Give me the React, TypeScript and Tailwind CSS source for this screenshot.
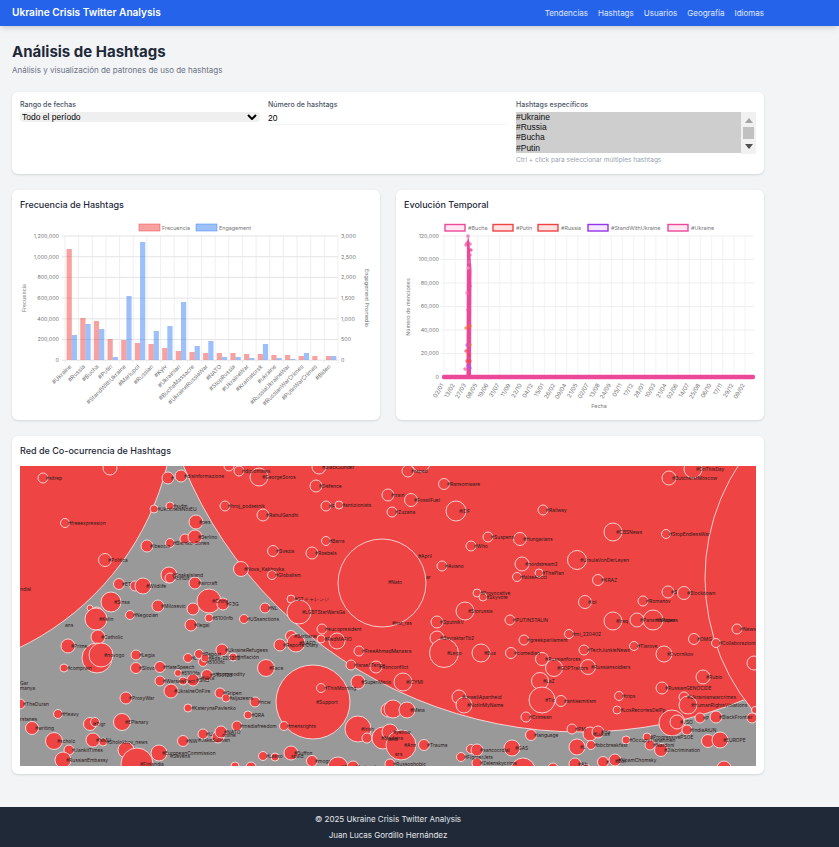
import React from 'react';

type Node = [number, number, number, string?];

const NAV_LINKS = ['Tendencias', 'Hashtags', 'Usuarios', 'Geografía', 'Idiomas'];

const BAR_LABELS = ['#Ukraine', '#Russia', '#Bucha', '#Putin', '#StandWithUkraine', '#Mariupol', '#Russian', '#Kyiv', '#Ukrainian', '#BuchaMassacre', '#UkraineRussiaWar', '#NATO', '#StopRussia', '#UkraineWar', '#Kramatorsk', '#ukraine', '#RussiaUkraineWar', '#RussianWarCrimes', '#PutinWarCrimes', '#Biden'];
// bar tops in page pixels
const RED_TOPS = [249, 318, 321, 339, 340, 343, 344, 348, 351, 352, 353, 353, 353, 354, 354, 355, 355, 356, 356, 356];
const BLUE_TOPS = [335, 324, 329, 357, 296, 242, 331, 326, 302, 346, 341, 357, 357, 358, 344, 358, 359, 353, 360, 356];

const DATES = ['02/01', '13/02', '27/03', '08/05', '19/06', '31/07', '11/09', '22/10', '04/12', '15/01', '26/02', '09/04', '21/05', '02/07', '13/08', '24/09', '05/11', '17/12', '28/01', '10/03', '21/04', '02/06', '14/07', '25/08', '06/10', '17/11', '29/12', '09/02'];

const LEGEND: [number, string, string, string][] = [
  [445, '#Bucha', '#ec4899', '#fce7f3'],
  [493, '#Putin', '#ef4444', '#fee2e2'],
  [538, '#Russia', '#ef4444', '#fee2e2'],
  [588, '#StandWithUkraine', '#9333ea', '#f3e8ff'],
  [668, '#Ukraine', '#ec4899', '#fce7f3'],
];

const SPIKE_DOTS: [number, number, string][] = [
  [468, 236, '#ec4899'], [467, 243, '#ec4899'], [470, 244, '#ec4899'], [466, 245, '#ec4899'], [470, 250, '#ec4899'], [471, 250, '#ec4899'],
  [470, 255, '#ec4899'], [469, 262, '#f472b6'], [468, 268, '#f9a8d4'], [470, 286, '#ec4899'], [467, 293, '#f472b6'], [468, 310, '#ec4899'],
  [466, 328, '#f97316'], [470, 326, '#f97316'], [470, 345, '#f97316'], [466, 351, '#ef4444'], [469, 355, '#ef4444'], [467, 361, '#ef4444'],
  [470, 361, '#ef4444'], [468, 366, '#a855f7'], [465, 369, '#ec4899'], [470, 368, '#a855f7'], [467, 345, '#a855f7'], [469, 372, '#ec4899'],
];

const NODES: Node[] = [
  [43, 478, 5, '#sitrep'], [110, 468, 7], [168, 478, 6, '#'], [181, 476, 6, '#disinformazione'], [229, 466, 5], [239, 471, 5, '#diplomates'],
  [259, 477, 9, '#GeorgeSoros'], [319, 467, 7, '#BlackSunder'], [316, 486, 6, '#Defence'], [388, 495, 6, '#train'], [326, 506, 5, '#F'],
  [339, 505, 4, '#antizionists'], [225, 506, 5, '#hroj_podsetnik'], [263, 515, 6, '#RahulGandhi'], [154, 509, 4, '#UkraineIsNotEU'], [170, 506, 4, '#syfm'],
  [65, 523, 4.5, '#freeexpression'], [196, 522, 7, '#pes'], [185, 539, 5], [195, 537, 7, '#Berlino'], [147, 546, 6, '#Ibeocio'], [170, 543, 4.5, '#Bielsko-Sones'],
  [105, 560, 6.5, '#Politica'], [273, 551, 5.5, '#Svezia'], [312, 553, 6, '#Roebels'], [326, 541, 4.5, '#Barra'], [241, 569, 7.5, '#Nova_Kakhovka'],
  [272, 575, 4.5, '#Globalism'], [169, 575, 8, '#SnakeIsland'], [170, 578, 5, '#cirtuit'], [195, 583, 6, '#aircraft'], [119, 584, 5.5, '#ET'], [135, 586, 5],
  [143, 586, 8, '#Wildlife'], [291, 599, 4, '#GTチャレンジ'], [111, 602, 10, '#Sinsa'], [158, 606, 6, '#Milosevic'], [209, 601, 12, '#China'], [223, 604, 6, '#F3G'],
  [265, 608, 5, '#NL'], [299, 612, 12, '#LGBTStarWarsGa'], [193, 609, 6], [90, 608, 3], [97, 613, 6],
  [96, 619, 11, '#Kelin'], [130, 615, 4.5, '#Negozian'], [191, 625, 6, '#Ilegal'], [209, 618, 4, '#5100rfb'], [244, 619, 4.5, '#USsanctions'],
  [98, 637, 7, '#Catholic'], [68, 646, 7, '#Prime'], [97, 658, 15], [101, 655, 12, '#novogo'], [136, 655, 5, '#Legia'], [64, 668, 4, '#comprain'], [136, 668, 5.5, '#Slovo'],
  [160, 667, 5.5, '#HateSpeech'], [188, 658, 4.5, '#L'], [199, 654, 4.5, '#Repost'], [203, 662, 4.5, '#5100fc'], [205, 658, 4, '#Ads-220202'], [222, 650, 6, '#UkraineRefugees'],
  [233, 657, 4, '#Inflación'], [266, 668, 8.5, '#Face'], [178, 673, 3.5, '#5100fa'], [207, 675, 5.5, '#510012d'], [193, 680, 6, '#SNB'], [160, 681, 5, '#WarsawPact'], [183, 681, 4],
  [171, 691, 7, '#UkraineOnFire'], [220, 693, 5, '#Gripen'], [226, 698, 4, '#aljazeera'], [126, 698, 6, '#ProxyWar'], [255, 702, 5, '#ncw'], [321, 688, 4.5, '#ThisMorning'],
  [188, 708, 4, '#KaterynaPavlenko'], [58, 714, 4.5, '#Heavy'], [248, 715, 4, '#QRA'], [32, 728, 6.5, '#writing'], [90, 724, 6.5, '#Tigr'], [95, 722, 4.5], [122, 722, 8.5, '#EPlenary'],
  [237, 726, 5, '#mediafreedom'], [284, 726, 4.5, '#mensrights'], [358, 729, 13, '#Irish'], [54, 741, 8.5, '#scholz'], [93, 740, 7, '#NMU'], [103, 742, 4, '#Sholokhov_news'],
  [183, 741, 5.5, '#NW'], [203, 734, 5, '#U'], [218, 737, 6], [221, 732, 6, '#NATO'], [69, 750, 5, '#JankitTimes'], [63, 760, 8, '#RussianEmbassy'], [126, 750, 8],
  [137, 764, 16, '#Finlandia'], [159, 753, 8, '#EuropeanCommission'], [263, 756, 4.5, '#Lasso'], [275, 757, 4], [291, 753, 7, '#Buffon'], [312, 761, 5.5, '#mogr'],
  [338, 767, 10, '#SaveMariupol'], [353, 767, 6], [235, 766, 4], [251, 767, 5], [20, 704, 5, '#TheDuran'], [280, 645, 6, '#ReporterDiary'], [291, 636, 5.5, '#Barbarie'],
  [296, 643, 9, '#NAFO'], [322, 629, 5, '#eucopresident'], [321, 639, 4, '#RedMAFIO'], [337, 641, 8], [359, 651, 5, '#FreeAhmadManasra'], [351, 665, 5, '#IsraeliTerror'],
  [376, 667, 6, '#Ronconflict'], [358, 682, 7, '#SuperMario'], [367, 738, 5], [378, 738, 6, '#Madeira'], [383, 738, 11], [388, 710, 7],
  [421, 463, 9], [408, 471, 6, '#raped'], [444, 484, 5.5, '#Ransomware'], [411, 500, 6.5, '#FossilFuel'], [392, 512, 5, '#Zuzana'], [456, 511, 10, '#IDF'], [543, 510, 5, '#Railway'],
  [613, 532, 9, '#CBSNews'], [666, 534, 4.5, '#StopEndlessWar'], [669, 478, 7, '#ButchersfMoscow'], [693, 469, 9, '#OnThisDay'], [488, 537, 5, '#Suspens'], [520, 539, 6.5, '#Hungarians'],
  [471, 546, 5, '#Who'], [577, 560, 9.5, '#UrsulaVonDerLeyen'], [442, 566, 5, '#Aviano'], [522, 564, 7, '#nordstream2'], [539, 573, 4, '#ThePlan'], [517, 577, 4.5, '#falseAccci'],
  [598, 580, 5.5, '#KRAZ'], [477, 593, 4, '#Provocative'], [483, 597, 4, '#Skyvote'], [668, 592, 6, '#S'], [684, 593, 6.5, '#Blockdown'], [643, 601, 5, '#Romanov'], [585, 602, 6.5, '#lol'],
  [465, 611, 9, '#Storussia'], [437, 622, 6, '#SputnikV'], [510, 620, 5, '#PUTINSTALIN'], [613, 621, 9, '#Iraq'], [637, 620, 7, '#PanamaPapers'], [653, 620, 10, '#Nesara'],
  [737, 629, 5, '#News'], [569, 634, 4.5, '#mi_220402'], [437, 638, 7, '#BayraktarTb2'], [444, 653, 14.5, '#Lego'], [481, 653, 9, '#Bus'], [524, 640, 5, '#greekparliament'],
  [511, 653, 5.5, '#comedian'], [584, 650, 5, '#TechJunkieNews'], [634, 646, 4.5, '#Tlarove'], [664, 654, 8, '#Dvornikov'], [694, 639, 5.5, '#OMG'], [716, 643, 4.5, '#Collaborazionisti'],
  [542, 659, 6.5, '#Russianforces'], [554, 668, 8.5, '#GOPTraitors'], [588, 667, 7.5, '#Russiansoldiers'], [403, 682, 9, '#ICYMI'], [540, 681, 8.5, '#LaZ'], [703, 677, 7, '#Rubio'],
  [662, 688, 6, '#RussianGENOCIDE'], [619, 696, 4.5, '#trips'], [542, 700, 13, '#Tic'], [561, 701, 5.5, '#antisemitism'], [459, 697, 7, '#IsraeliApartheid'], [464, 705, 8, '#NotInMyName'],
  [617, 710, 4, '#LosRecortesDelPp'], [526, 717, 5, '#Crimean'], [684, 697, 5, '#Ukrainianwarcrimes'], [688, 705, 9, '#HumanRightsViolations'], [700, 718, 5, '#P'], [716, 717, 6, '#BlackFrontier'],
  [752, 718, 5], [672, 723, 13], [677, 722, 7, '#JSO'], [687, 730, 5, '#IndiaAtUN'], [393, 709, 9], [407, 710, 8, '#Meta'], [390, 732, 8, '#yellow'], [401, 745, 15, '#Ann'],
  [424, 745, 5.5, '#Trauma'], [531, 735, 5.5, '#language'], [572, 729, 5, '#PM'], [590, 734, 7, '#Lukas'], [598, 732, 6, '#Ha'], [577, 747, 8, '#L'], [591, 745, 4.5, '#bbcbreakfast'],
  [626, 740, 4, '#OccupyTiananmen'], [647, 737, 4, '#ProgressivePSOE'], [650, 745, 5, '#Nardoni'], [661, 750, 6.5, '#Discrimination'], [708, 741, 6.5], [720, 740, 8, '#EUROPE'],
  [512, 748, 8, '#GAS'], [471, 749, 4.5], [477, 750, 6, '#sancocrdial'], [461, 757, 4.5, '#FighterJets'], [477, 763, 5, '#Zelenskycrime'], [390, 764, 5, '#Russophobic'],
  [523, 770, 12, '#USAAgency'], [553, 768, 5], [575, 764, 6, '#Ab'], [586, 768, 4], [603, 762, 5.5, '#'], [615, 760, 6, '#NoamChomsky'], [724, 768, 7], [755, 710, 3.5], [754, 663, 7],
];

const LOOSE_LABELS: [number, number, string][] = [
  [20, 591, 'ndial'], [20, 685, 'Gar'], [20, 690, 'manya'], [20, 721, 'rstanes'], [65, 627, 'ans'], [418, 558, '#April'], [426, 579, 'ar'], [388, 584, '#Nato'], [316, 704, '#Support'],
  [170, 758, '#Sevens'], [615, 763, '#Bot'], [198, 742, '#JakeSullivan'], [222, 737, 'online'], [291, 758, 'spald'], [201, 680, '#Viva'], [216, 676, '#commodity'], [386, 741, 'rland'], [395, 756, 'ers'],
  [392, 625, '#hat_ras'],
];

const Card = ({ title, children }: { title: string; children: React.ReactNode }) => (
  <div className="bg-white rounded-md shadow-sm p-2">
    <h2 className="text-[9px] leading-[14px] font-medium text-gray-800 mb-2">{title}</h2>
    {children}
  </div>
);

const BarChart = () => {
  const step = 273 / 20;
  return (
    <svg viewBox="20 220 352 192" className="block w-full h-[192px]" fontFamily="Inter, sans-serif" fontSize="5.4" fill="#777">
      <rect x="139" y="224" width="21" height="7" fill="#ef4444" fillOpacity="0.5" stroke="#ef4444" strokeOpacity="0.6" strokeWidth="0.8" />
      <text x="162" y="230">Frecuencia</text>
      <rect x="196" y="224" width="21" height="7" fill="#3b82f6" fillOpacity="0.5" stroke="#3b82f6" strokeOpacity="0.6" strokeWidth="0.8" />
      <text x="219" y="230">Engagement</text>
      {[0, 1, 2, 3, 4, 5, 6].map((i) => {
        const y = 236 + i * 20.7;
        return (
          <g key={i}>
            <line x1="62" x2="338" y1={y} y2={y} stroke="#dcdcdc" strokeWidth="0.8" />
            <text x="59" y={y + 1.8} textAnchor="end">{((6 - i) * 200000).toLocaleString('en-US')}</text>
            <text x="341" y={y + 1.8}>{((6 - i) * 500).toLocaleString('en-US')}</text>
          </g>
        );
      })}
      {BAR_LABELS.map((label, i) => {
        const x = 65 + i * step;
        const mid = x + step / 2;
        return (
          <g key={label}>
            <line x1={x} x2={x} y1="236" y2="363" stroke="#e8e8e8" strokeWidth="0.7" />
            <rect x={x + 1.6} y={RED_TOPS[i]} width="5.2" height={360 - RED_TOPS[i]} fill="#ef4444" fillOpacity="0.5" />
            <rect x={x + 6.8} y={BLUE_TOPS[i]} width="5.2" height={360 - BLUE_TOPS[i]} fill="#3b82f6" fillOpacity="0.5" />
            <text x={mid} y="367" fontSize="5.8" textAnchor="end" transform={`rotate(-45 ${mid} 367)`}>{label}</text>
          </g>
        );
      })}
      <line x1="338" x2="338" y1="236" y2="363" stroke="#e8e8e8" strokeWidth="0.7" />
      <text x="26" y="298" textAnchor="middle" transform="rotate(-90 26 298)">Frecuencia</text>
      <text x="365" y="298" textAnchor="middle" transform="rotate(90 365 298)">Engagement Promedio</text>
    </svg>
  );
};

const LineChart = () => (
  <svg viewBox="404 220 352 192" className="block w-full h-[192px]" fontFamily="Inter, sans-serif" fontSize="5.4" fill="#777">
    {LEGEND.map(([x, label, stroke, fill]) => (
      <g key={label}>
        <rect x={x} y="224.5" width="20" height="6.5" fill={fill} stroke={stroke} strokeWidth="1.4" />
        <text x={x + 23} y="230">{label}</text>
      </g>
    ))}
    {[0, 1, 2, 3, 4, 5].map((i) => {
      const y = 236 + i * 23.5;
      return (
        <g key={i}>
          <line x1="441" x2="754" y1={y} y2={y} stroke="#e6e6e6" strokeWidth="0.7" />
          <text x="439" y={y + 1.8} textAnchor="end">{((6 - i) * 20000).toLocaleString('en-US')}</text>
        </g>
      );
    })}
    <text x="439" y="379" textAnchor="end">0</text>
    {DATES.map((d, i) => {
      const x = 444 + i * 11.15;
      return (
        <g key={d + i}>
          <line x1={x} x2={x} y1="236" y2="380" stroke="#eeeeee" strokeWidth="0.7" />
          <text x={x} y="385" fontSize="5.8" textAnchor="end" transform={`rotate(-60 ${x} 385)`}>{d}</text>
        </g>
      );
    })}
    <path d="M466.5 377 L467 242 L468.2 236 L469.4 242 L471.5 270 L471 377 Z" fill="#ec4899" />
    {SPIKE_DOTS.map(([x, y, color], i) => (
      <circle key={i} cx={x} cy={y} r="1.8" fill={color} fillOpacity="0.65" />
    ))}
    <line x1="444" x2="753" y1="377" y2="377" stroke="#ec4899" strokeWidth="4.4" strokeLinecap="round" />
    <text x="410" y="307" textAnchor="middle" transform="rotate(-90 410 307)">Número de menciones</text>
    <text x="599" y="408" textAnchor="middle">Fecha</text>
  </svg>
);

const Network = () => (
  <svg viewBox="20 466 736 300" className="block w-full h-[300px]" fontFamily="Inter, sans-serif" fontSize="4.9">
    <rect x="20" y="466" width="736" height="300" fill="#999999" />
    <g fill="#ef4444" stroke="#fbeeee" strokeWidth="0.8">
      <circle cx="-100" cy="400" r="275" />
      <circle cx="581" cy="302" r="430" />
      <circle cx="912" cy="578" r="207" />
      <circle cx="382" cy="583" r="44" />
      <circle cx="313" cy="702" r="37" />
      {NODES.map(([x, y, r], i) => (
        <circle key={i} cx={x} cy={y} r={r} />
      ))}
    </g>
    <g fill="#2b1a1a">
      {NODES.filter((n) => n[3]).map(([x, y, , label], i) => (
        <text key={i} x={x + 3} y={y + 1.7}>{label}</text>
      ))}
      {LOOSE_LABELS.map(([x, y, label], i) => (
        <text key={i} x={x} y={y}>{label}</text>
      ))}
    </g>
  </svg>
);

const App: React.FC = () => {
  return (
    <div className="min-h-screen flex flex-col bg-[#f3f4f6] font-['Inter',sans-serif]">
      <nav className="bg-[#2563eb] h-[26px] shadow-md shrink-0">
        <div className="w-[776px] h-full px-3 flex items-center justify-between">
          <span className="text-[10.1px] font-semibold text-white">Ukraine Crisis Twitter Analysis</span>
          <div className="flex gap-[10px]">
            {NAV_LINKS.map((link) => (
              <span key={link} className="text-[8px] text-white/85">{link}</span>
            ))}
          </div>
        </div>
      </nav>

      <main className="w-[776px] px-3 pt-4 flex-1">
        <h1 className="text-[15px] leading-[20px] font-bold text-gray-800">Análisis de Hashtags</h1>
        <p className="text-[8px] leading-[12px] text-gray-500 mt-[2px] mb-4">Análisis y visualización de patrones de uso de hashtags</p>

        <div className="bg-white rounded-md shadow-sm p-2 h-[82px] grid grid-cols-3 gap-2 mb-4">
          <div>
            <label className="block text-[7px] leading-[8px] mt-[1px] mb-[3px] font-medium text-gray-600">Rango de fechas</label>
            <div className="relative">
              <select className="block w-full h-[10px] pl-[2px] appearance-none bg-[#efefef] rounded-sm text-[8.5px] leading-[10px] text-black font-['Liberation_Sans',sans-serif]">
                <option>Todo el período</option>
              </select>
              <svg width="10" height="6" viewBox="0 0 10 6" className="absolute right-[3px] top-[2px] pointer-events-none">
                <path d="M1 1 L5 5 L9 1" fill="none" stroke="#000" strokeWidth="2" />
              </svg>
            </div>
          </div>
          <div>
            <label className="block text-[7px] leading-[8px] mt-[1px] mb-[3px] font-medium text-gray-600">Número de hashtags</label>
            <input type="number" defaultValue={20} className="block w-full h-[13px] border-b border-gray-100 rounded-sm text-[8.5px] text-black font-['Liberation_Sans',sans-serif]" />
          </div>
          <div>
            <label className="block text-[7px] leading-[8px] mt-[1px] mb-[3px] font-medium text-gray-600">Hashtags específicos</label>
            <div className="relative">
              <select multiple defaultValue={['#Ukraine', '#Russia', '#Bucha', '#Putin']} className="block w-full h-[42px] text-[8.5px] text-black font-['Liberation_Sans',sans-serif]">
                {['#Ukraine', '#Russia', '#Bucha', '#Putin', '#StandWithUkraine', '#Mariupol'].map((tag) => (
                  <option key={tag} value={tag}>{tag}</option>
                ))}
              </select>
              <div className="absolute top-0 right-0 bottom-0 w-[15px] bg-[#f1f1f1] flex flex-col items-center">
                <svg width="8" height="5" viewBox="0 0 8 5" className="mt-[6px]"><path d="M0 5 L4 0 L8 5 Z" fill="#a3a3a3" /></svg>
                <div className="w-[11px] h-[12px] bg-[#c1c1c1] mt-[4px]" />
                <svg width="8" height="5" viewBox="0 0 8 5" className="mt-[5px]"><path d="M0 0 L8 0 L4 5 Z" fill="#505050" /></svg>
              </div>
            </div>
            <p className="text-[6.5px] leading-[8px] mt-[2px] text-gray-400">Ctrl + click para seleccionar múltiples hashtags</p>
          </div>
        </div>

        <div className="grid grid-cols-2 gap-4 mb-4">
          <Card title="Frecuencia de Hashtags"><BarChart /></Card>
          <Card title="Evolución Temporal"><LineChart /></Card>
        </div>

        <Card title="Red de Co-ocurrencia de Hashtags"><Network /></Card>
      </main>

      <footer className="bg-[#1f2937] h-[40px] mt-[33px] shrink-0">
        <div className="w-[776px] pt-1 text-center text-[8px] leading-[16px] text-gray-200">
          <p>© 2025 Ukraine Crisis Twitter Analysis</p>
          <p>Juan Lucas Gordillo Hernández</p>
        </div>
      </footer>
    </div>
  );
};

export default App;
